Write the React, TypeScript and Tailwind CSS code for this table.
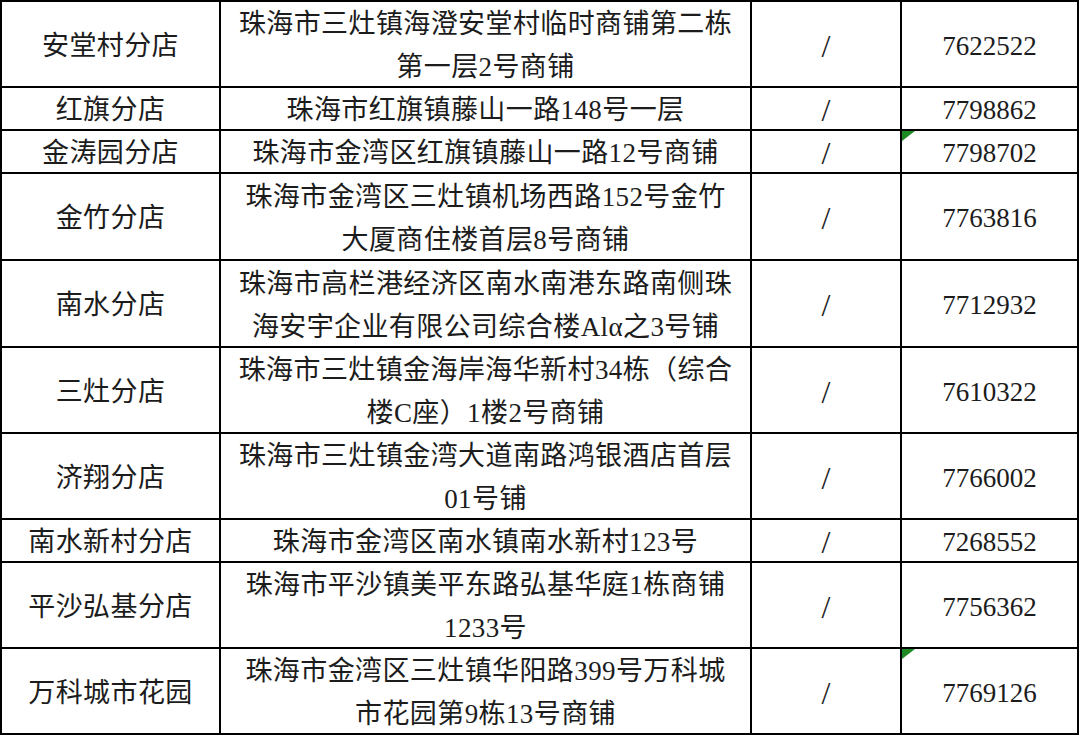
import React from 'react';

type Row = {
  name: string;
  addr: string[];
  phone: string;
  rows: string;
  mark?: boolean;
};

const data: Row[] = [
  { name: '安堂村分店', addr: ['珠海市三灶镇海澄安堂村临时商铺第二栋', '第一层2号商铺'], phone: '7622522', rows: 'grid-rows-[86px]' },
  { name: '红旗分店', addr: ['珠海市红旗镇藤山一路148号一层'], phone: '7798862', rows: 'grid-rows-[43px]' },
  { name: '金涛园分店', addr: ['珠海市金湾区红旗镇藤山一路12号商铺'], phone: '7798702', rows: 'grid-rows-[43px]', mark: true },
  { name: '金竹分店', addr: ['珠海市金湾区三灶镇机场西路152号金竹', '大厦商住楼首层8号商铺'], phone: '7763816', rows: 'grid-rows-[87px]' },
  { name: '南水分店', addr: ['珠海市高栏港经济区南水南港东路南侧珠', '海安宇企业有限公司综合楼Alα之3号铺'], phone: '7712932', rows: 'grid-rows-[87px]' },
  { name: '三灶分店', addr: ['珠海市三灶镇金海岸海华新村34栋（综合', '楼C座）1楼2号商铺'], phone: '7610322', rows: 'grid-rows-[86px]' },
  { name: '济翔分店', addr: ['珠海市三灶镇金湾大道南路鸿银酒店首层', '01号铺'], phone: '7766002', rows: 'grid-rows-[86px]' },
  { name: '南水新村分店', addr: ['珠海市金湾区南水镇南水新村123号'], phone: '7268552', rows: 'grid-rows-[43px]' },
  { name: '平沙弘基分店', addr: ['珠海市平沙镇美平东路弘基华庭1栋商铺', '1233号'], phone: '7756362', rows: 'grid-rows-[86px]' },
  { name: '万科城市花园', addr: ['珠海市金湾区三灶镇华阳路399号万科城', '市花园第9栋13号商铺'], phone: '7769126', rows: 'grid-rows-[86px]', mark: true },
];

const cell = 'min-h-0 border-r-2 border-b-2 border-black flex flex-col items-center justify-center';

const App = () => {
  return (
    <div
      className="w-[1080px] h-[735px] bg-white overflow-hidden text-[#1c1c1c] text-[27px] leading-[43px]"
      style={{ fontFamily: '"Liberation Serif", "Noto Sans CJK SC", serif' }}
    >
      <div className="w-[1079px] border-l-2 border-t-2 border-black">
        {data.map((r) => (
          <div key={r.name} className={`grid grid-cols-[219px_531px_150px_177px] ${r.rows}`}>
            <div className={`${cell} tracking-[0.4px] pt-[4px]`}>{r.name}</div>
            <div className={`${cell} tracking-[0.4px] pt-[4px]`}>
              {r.addr.map((line) => (
                <div key={line} className="whitespace-nowrap">{line}</div>
              ))}
            </div>
            <div className={`${cell} pt-[4px] text-[32px]`}>/</div>
            <div className={`${cell} relative pt-[4px]`}>
              {r.mark && (
                <svg className="absolute left-0 top-0" width="13" height="10" viewBox="0 0 13 10">
                  <polygon points="0,0 13,0 0,10" fill="#1f8a24" />
                </svg>
              )}
              {r.phone}
            </div>
          </div>
        ))}
      </div>
    </div>
  );
};

export default App;
